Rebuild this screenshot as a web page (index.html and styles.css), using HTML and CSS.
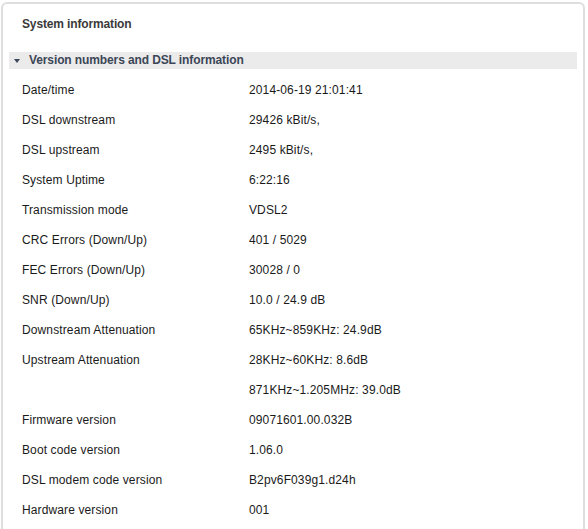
FILE: index.html
```html
<!DOCTYPE html>
<html>
<head>
<meta charset="utf-8">
<link rel="stylesheet" href="styles.css">
</head>
<body>
<div class="panel">
  <div class="title">System information</div>
  <div class="section">
    <div class="section-head"><span class="caret"></span>Version numbers and DSL information</div>
    <div class="rows">
      <div class="row"><span class="label">Date/time</span><span class="value">2014-06-19 21:01:41</span></div>
      <div class="row"><span class="label">DSL downstream</span><span class="value">29426 kBit/s,</span></div>
      <div class="row"><span class="label">DSL upstream</span><span class="value">2495 kBit/s,</span></div>
      <div class="row"><span class="label">System Uptime</span><span class="value">6:22:16</span></div>
      <div class="row"><span class="label">Transmission mode</span><span class="value">VDSL2</span></div>
      <div class="row"><span class="label">CRC Errors (Down/Up)</span><span class="value">401 / 5029</span></div>
      <div class="row"><span class="label">FEC Errors (Down/Up)</span><span class="value">30028 / 0</span></div>
      <div class="row"><span class="label">SNR (Down/Up)</span><span class="value">10.0 / 24.9 dB</span></div>
      <div class="row"><span class="label">Downstream Attenuation</span><span class="value">65KHz~859KHz: 24.9dB</span></div>
      <div class="row"><span class="label">Upstream Attenuation</span><span class="value">28KHz~60KHz: 8.6dB</span></div>
      <div class="row"><span class="label"></span><span class="value">871KHz~1.205MHz: 39.0dB</span></div>
      <div class="row"><span class="label">Firmware version</span><span class="value">09071601.00.032B</span></div>
      <div class="row"><span class="label">Boot code version</span><span class="value">1.06.0</span></div>
      <div class="row"><span class="label">DSL modem code version</span><span class="value">B2pv6F039g1.d24h</span></div>
      <div class="row"><span class="label">Hardware version</span><span class="value">001</span></div>
    </div>
  </div>
</div>
</body>
</html>
```

FILE: styles.css
```css
html, body {
  margin: 0;
  padding: 0;
  background: #fff;
}
body {
  font-family: "Liberation Sans", Arial, sans-serif;
  font-size: 12px;
  letter-spacing: 0.12px;
  color: #1a1a1a;
  overflow: hidden;
}
.panel {
  margin: 2px 0 0 1px;
  width: 584px;
  height: 540px;
  box-sizing: border-box;
  border: 2px solid #dedede;
  border-bottom: none;
  border-radius: 6px 6px 0 0;
  padding: 0 6px;
}
.title {
  padding: 10px 0 0 13px;
  line-height: 20px;
  font-weight: bold;
  letter-spacing: -0.14px;
  color: #3a3a3a;
}
.section {
  margin-top: 18px;
}
.section-head {
  display: flex;
  align-items: center;
  box-sizing: border-box;
  height: 17px;
  padding: 0 0 2px 5px;
  background: #ebebeb;
  font-weight: bold;
  letter-spacing: -0.11px;
  color: #3b4657;
}
.caret {
  width: 0;
  height: 0;
  border-left: 3.5px solid transparent;
  border-right: 3.5px solid transparent;
  border-top: 4px solid #3b4657;
  margin-right: 9px;
  margin-top: 2px;
}
.rows {
  padding-top: 6px;
}
.row {
  display: flex;
  height: 30px;
  align-items: center;
}
.label {
  width: 227px;
  padding-left: 13px;
  flex: none;
}
.value {
  flex: 1;
}
```
